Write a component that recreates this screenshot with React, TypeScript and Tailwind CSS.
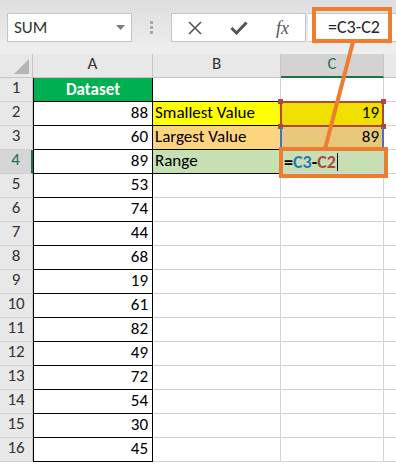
import React from "react";

const values = [88, 60, 89, 53, 74, 44, 68, 19, 61, 82, 49, 72, 54, 30, 45];

const font = "font-['Calibri','Liberation_Sans',sans-serif]";

function RowHead({ n }: { n: number }) {
  const active = n === 4;
  return (
    <div
      className={`h-[24px] flex items-end justify-center pb-[1px] border-b border-[#d0d0d0] text-[17px] ${
        active ? "bg-[#d6d6d6] text-[#217346] border-r-2 border-r-[#217346]" : "bg-[#e8e8e8] text-[#333] border-r border-r-[#c6c6c6]"
      }`}
    >
      {n}
    </div>
  );
}

export default function App() {
  return (
    <div className={`relative w-[396px] h-[466px] overflow-hidden bg-white ${font}`}>
      {/* toolbar */}
      <div className="h-[54px] bg-gradient-to-b from-[#dedede] to-[#efefef] flex items-start pt-[13px] pl-[7px]">
        <div className="w-[125px] h-[29px] bg-white border border-[#c6c6c6] flex items-center justify-between pl-[6px] pr-[6px]">
          <span className="text-[17px] text-[#333]">SUM</span>
          <svg width="9" height="5" viewBox="0 0 9 5">
            <path d="M0 0 H9 L4.5 5 Z" fill="#7a7a7a" />
          </svg>
        </div>
        <div className="w-[39px] h-[29px] flex flex-col items-center justify-center gap-[2px]">
          <span className="w-[3px] h-[3px] bg-[#a8a8a8]" />
          <span className="w-[3px] h-[3px] bg-[#a8a8a8]" />
          <span className="w-[3px] h-[3px] bg-[#a8a8a8]" />
        </div>
        <div className="w-[135px] h-[29px] bg-white border border-[#c6c6c6] flex items-center pl-[16px] gap-[28px]">
          <svg width="14" height="14" viewBox="0 0 14 14">
            <path d="M1 1 L13 13 M13 1 L1 13" stroke="#555" strokeWidth="1.6" />
          </svg>
          <svg width="18" height="14" viewBox="0 0 18 14">
            <path d="M1.5 7 L6.5 12 L16.5 1.5" stroke="#555" strokeWidth="3" fill="none" />
          </svg>
          <span className="font-['Liberation_Serif',serif] italic text-[18px] text-[#555] leading-none">fx</span>
        </div>
        <div className="ml-[2px] flex-1 h-[29px] bg-white border-y border-[#c6c6c6] flex items-center pl-[20px]">
          <span className="text-[18px] text-[#222]">=C3-C2</span>
        </div>
      </div>

      {/* sheet grid */}
      <div className="grid grid-cols-[33px_120px_128px_103px_1fr]">
        {/* header row */}
        <div className="h-[24px] bg-[#e8e8e8] border-r border-b border-[#c6c6c6] flex items-end justify-end pr-[3px] pb-[3px]">
          <svg width="15" height="15" viewBox="0 0 15 15">
            <path d="M15 0 L15 15 L0 15 Z" fill="#b5b5b5" />
          </svg>
        </div>
        <div className="h-[24px] bg-[#e8e8e8] border-r border-b border-[#c6c6c6] flex items-end justify-center pb-[1px] text-[17px] text-[#333]">A</div>
        <div className="h-[24px] bg-[#e8e8e8] border-r border-b border-[#c6c6c6] flex items-end justify-center pb-[1px] text-[17px] text-[#333]">B</div>
        <div className="h-[24px] bg-[#d3d3d3] border-r border-r-[#c6c6c6] border-b-2 border-b-[#217346] flex items-end justify-center text-[17px] text-[#217346]">C</div>
        <div className="h-[24px] bg-[#e8e8e8] border-b border-[#c6c6c6]" />

        {/* row 1 */}
        <RowHead n={1} />
        <div className="h-[24px] bg-[#00b050] border-l border-r border-b border-black flex items-center justify-center text-[17px] font-bold text-white">
          Dataset
        </div>
        <div className="h-[24px] border-r border-[#d4d4d4] border-b border-b-black" />
        <div className="h-[24px] border-r border-b border-[#d4d4d4]" />
        <div className="h-[24px] border-b border-[#d4d4d4]" />

        {values.map((v, i) => {
          const r = i + 2;
          let b: React.ReactNode = <div className="h-[24px] border-r border-b border-[#d4d4d4]" />;
          let c: React.ReactNode = <div className="h-[24px] border-r border-b border-[#d4d4d4]" />;
          if (r === 2) {
            b = <div className="h-[24px] bg-[#ffff00] border-r border-b border-black flex items-end pl-[2px] text-[17px] text-black">Smallest Value</div>;
            c = <div className="h-[24px] bg-[#f0e000] border-r border-b border-[#d4d4d4] flex items-end justify-end pr-[4px] text-[17px] text-black">19</div>;
          } else if (r === 3) {
            b = <div className="h-[24px] bg-[#fdd57e] border-r border-b border-black flex items-end pl-[2px] text-[17px] text-black">Largest Value</div>;
            c = <div className="h-[24px] bg-[#e8c97c] border-r border-b border-[#d4d4d4] flex items-end justify-end pr-[4px] text-[17px] text-black">89</div>;
          } else if (r === 4) {
            b = <div className="h-[24px] bg-[#c6e0b4] border-r border-b border-black flex items-end pl-[2px] text-[17px] text-black">Range</div>;
            c = (
              <div className="h-[24px] bg-[#c6e0b4] border-r border-b border-[#d4d4d4] flex items-end pl-[3px] text-[18px] font-bold leading-[22px]">
                <span className="text-black">=</span>
                <span className="text-[#2e75b6]">C3</span>
                <span className="text-black">-</span>
                <span className="text-[#b4443e]">C2</span>
                <span className="ml-[1px] mb-[2px] w-[1px] h-[18px] bg-black" />
              </div>
            );
          }
          return (
            <React.Fragment key={r}>
              <RowHead n={r} />
              <div className="h-[24px] border-l border-r border-b border-black flex items-end justify-end pr-[4px] text-[17px] text-black">
                {v}
              </div>
              {b}
              {c}
              <div className="h-[24px] border-b border-[#d4d4d4]" />
            </React.Fragment>
          );
        })}
      </div>

      {/* reference highlight C2 (red) and C3 (blue) */}
      <div className="absolute left-[280px] top-[101px] w-[104px] h-[26px] border-2 border-[#b4443e]" />
      <span className="absolute left-[278px] top-[99px] w-[5px] h-[5px] bg-[#b4443e]" />
      <span className="absolute left-[381px] top-[99px] w-[5px] h-[5px] bg-[#b4443e]" />
      <span className="absolute left-[278px] top-[124px] w-[5px] h-[5px] bg-[#b4443e]" />
      <span className="absolute left-[381px] top-[124px] w-[5px] h-[5px] bg-[#b4443e]" />
      <div className="absolute left-[280px] top-[127px] w-[2px] h-[23px] bg-[#4472c4]" />
      <div className="absolute left-[382px] top-[127px] w-[2px] h-[23px] bg-[#4472c4]" />

      {/* orange callout */}
      <svg className="absolute left-0 top-0" width="396" height="466">
        <line x1="353" y1="42" x2="325" y2="149" stroke="#ed7d31" strokeWidth="4" />
      </svg>
      <div className="absolute left-[312px] top-[7px] w-[80px] h-[36px] border-4 border-[#ed7d31]" />
      <div className="absolute left-[279px] top-[147px] w-[109px] h-[31px] border-4 border-[#ed7d31]" />
    </div>
  );
}
